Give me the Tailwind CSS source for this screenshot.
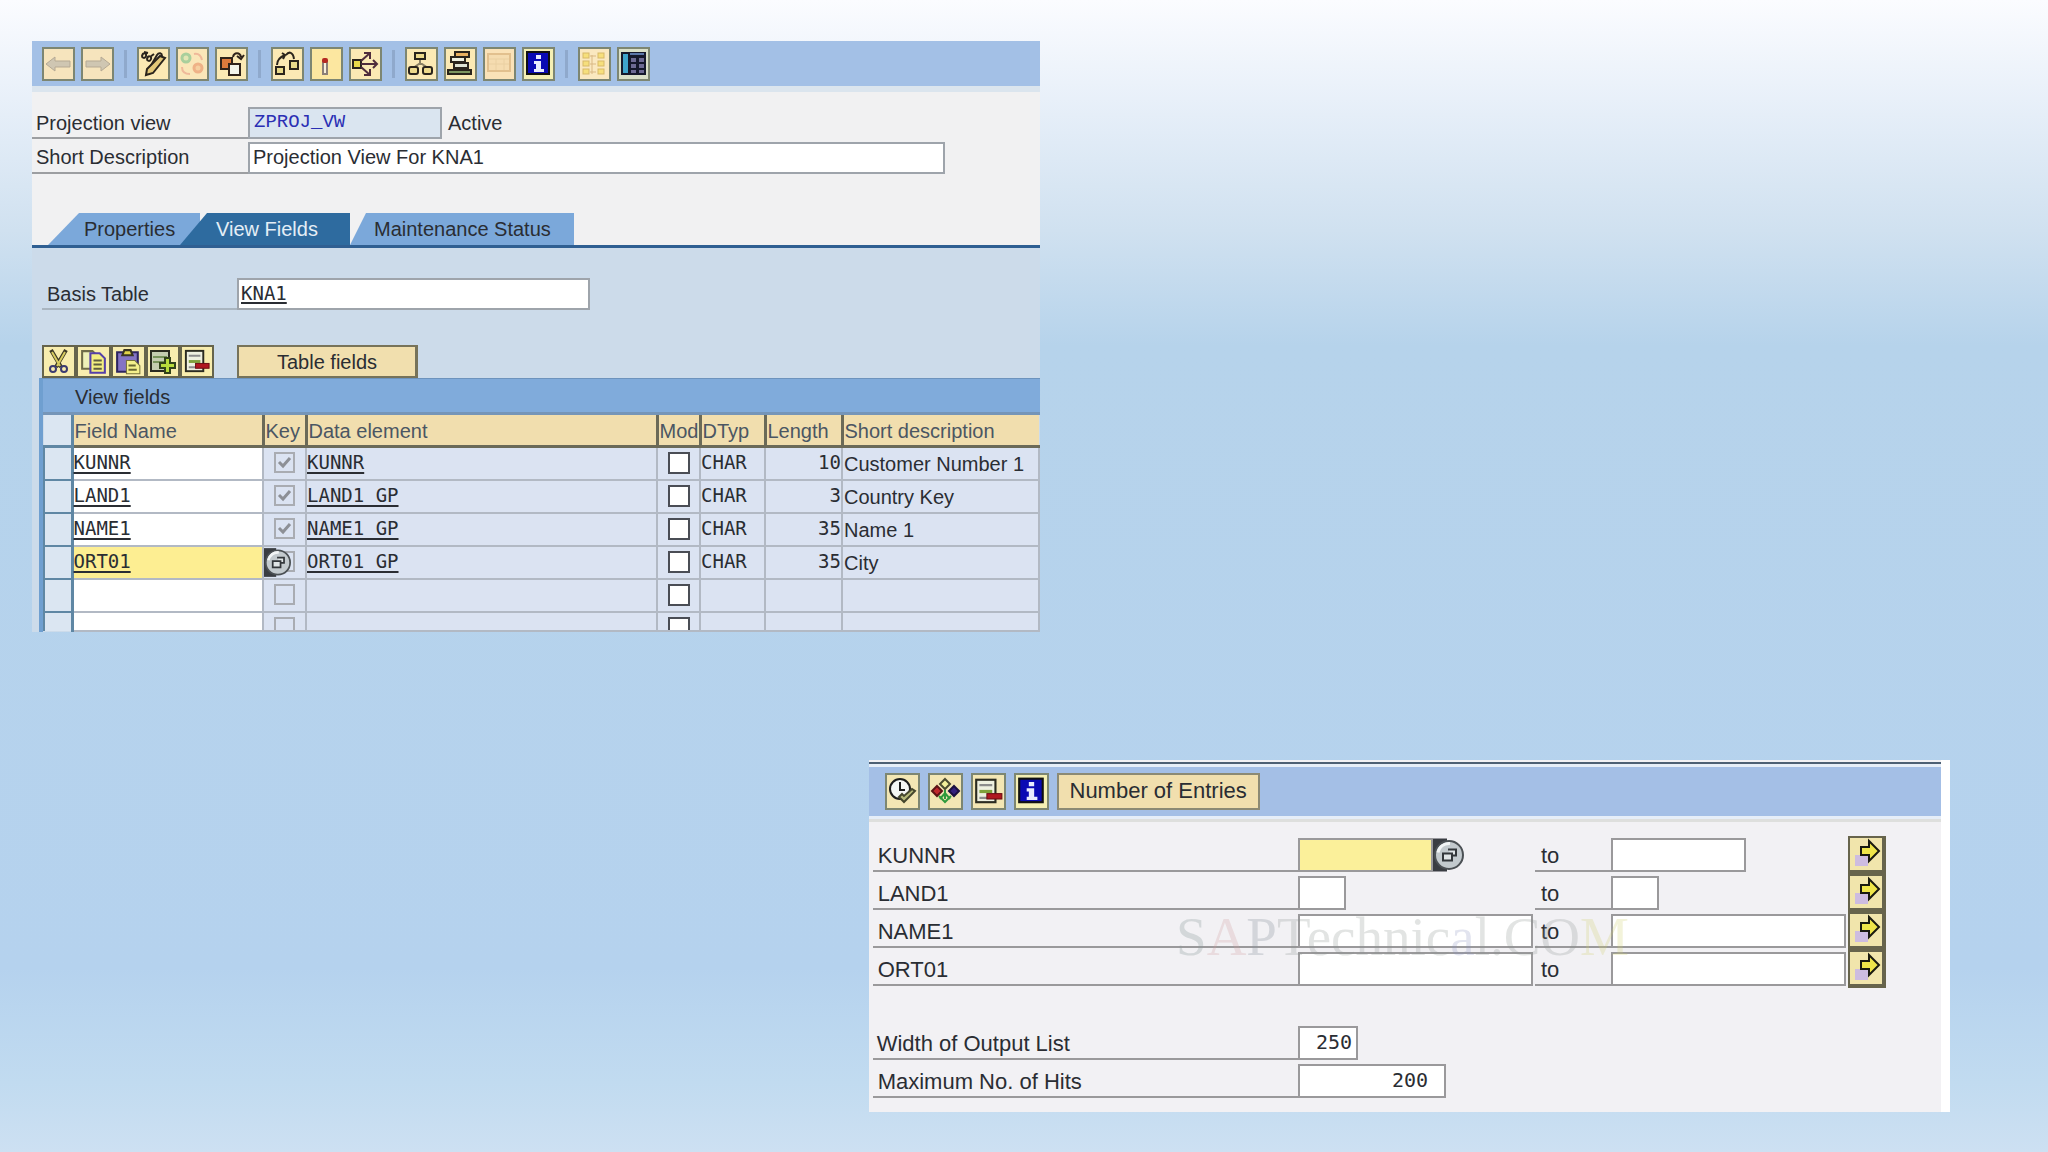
<!DOCTYPE html>
<html lang="en">
<head>
<meta charset="utf-8">
<meta name="viewport" content="width=device-width, initial-scale=1">
<title>Projection view</title>
<script src="https://cdn.jsdelivr.net/npm/@tailwindcss/browser@4"></script>
</head>
<body class="font-['Liberation_Sans',Arial,sans-serif] text-[#2a2d33]">

<!-- Shared icon shapes -->
<svg width="0" height="0" class="absolute" aria-hidden="true">
  <symbol id="i-info" viewBox="0 0 29 30">
    <rect x="3" y="3" width="22" height="22" fill="#0a0ab4" stroke="#111" stroke-width="2"/>
    <path d="M12 6h5v4h-5zM10 12h7v8h3v3H10v-3h2v-5h-2z" fill="#e9ecff"/>
  </symbol>
  <symbol id="i-rowminus" viewBox="0 0 29 30">
    <rect x="3" y="4" width="18" height="21" fill="#eef0e0" stroke="#2b2b20" stroke-width="2"/>
    <path d="M6 9h12M6 21h10" stroke="#8c8c8c" stroke-width="2"/><path d="M6 15h12" stroke="#7ea03a" stroke-width="3"/>
    <rect x="13" y="17" width="14" height="5" fill="#b01820" stroke="#6d0c12"/>
  </symbol>
  <symbol id="i-arrow" viewBox="0 0 32 32">
    <rect x="5" y="17" width="13" height="11" fill="#cdbce0"/>
    <path d="M11 9h8V3l10 10-10 10v-6h-8z" fill="#efe54a" stroke="#1a1a10" stroke-width="2"/>
  </symbol>
  <symbol id="i-f4" viewBox="0 0 31 33">
    <rect width="14" height="33" fill="#3a3d42"/>
    <circle cx="16" cy="16.5" r="14" fill="#c3cace" stroke="#4b5054" stroke-width="2"/>
    <path d="M5 14a11 11 0 0 1 12-9" fill="none" stroke="#f2f5f6" stroke-width="3"/>
    <path d="M15 11h8v6h-4M10 15h9v7h-9z" fill="#dfe4e6" stroke="#33373b" stroke-width="2"/>
  </symbol>
  <symbol id="i-check" viewBox="0 0 21 21">
    <path d="M5 10l4 4 7-8" fill="none" stroke="#8d9096" stroke-width="3"/>
  </symbol>
</svg>

<main class="flex min-h-screen flex-col bg-[linear-gradient(to_bottom,#fbfcff_0%,#e5eef8_10%,#d0e1f0_20%,#b6d3eb_30%,#b5d2ee_84%,#c1dbf0_94%,#cde0f2_100%)] pb-10 pt-[41px]">

  <!-- Dictionary view editor -->
  <section class="ml-8 w-[49.2%] min-w-[960px] overflow-hidden bg-[#f1f1f2] text-[20px] leading-6">
    <div class="flex h-[45px] items-center gap-1.5 bg-[#a3c0e6] pl-2.5">
      <button aria-label="Back" class="h-[34px] w-[33px] border-2 border-[#7d8672] bg-[#f6e4bd]"><svg viewBox="0 0 29 30"><path d="M2 15l9-7v4h15v6H11v4z" fill="#cfc6b2" stroke="#b5a994"/></svg></button>
      <button aria-label="Forward" class="h-[34px] w-[33px] border-2 border-[#7d8672] bg-[#f6e4bd]"><svg viewBox="0 0 29 30"><path d="M27 15l-9-7v4H3v6h15v4z" fill="#cfc6b2" stroke="#b5a994"/></svg></button>
      <span class="mx-1 h-7 w-[3px] bg-[#8fa9cc]"></span>
      <button aria-label="Display or change" class="h-[34px] w-[33px] border-2 border-[#7d8672] bg-[#fbe9b4]"><svg viewBox="0 0 29 30"><path d="M10 20L18 6c2-3 5-2 5 1L11 24z" fill="#f3ead0" stroke="#2a241c" stroke-width="2"/><path d="M3 7c1-4 5-3 4 0s-4 2-4 0zM8 10c1-4 5-3 4 0s-4 2-4 0zM5 3l4 1M11 8l4-3" fill="none" stroke="#2a241c" stroke-width="2"/><path d="M7 26l1-6L21 7l5 2-12 15z" fill="#e3c878" stroke="#2a241c" stroke-width="2"/></svg></button>
      <button aria-label="Activate" class="h-[34px] w-[33px] border-2 border-[#7d8672] bg-[#fae6b8]"><svg viewBox="0 0 29 30"><circle cx="8" cy="9" r="4" fill="#e2e6b4" stroke="#a9cf9c" stroke-width="3"/><circle cx="20" cy="19" r="4" fill="#f6cfa0" stroke="#efb287" stroke-width="3"/><path d="M16 5c5-1 7 2 8 6M4 18c0 5 3 7 8 7" fill="none" stroke="#efb99a" stroke-width="2"/></svg></button>
      <button aria-label="Other object" class="h-[34px] w-[33px] border-2 border-[#7d8672] bg-[#fbe9b4]"><svg viewBox="0 0 29 30"><rect x="4" y="9" width="11" height="11" fill="#dd7a3c" stroke="#30231a" stroke-width="2"/><rect x="12" y="15" width="11" height="11" fill="#f3f4ea" stroke="#30231a" stroke-width="2"/><path d="M16 8c1-5 7-5 8 0M20 7l4 3 3-4" fill="none" stroke="#30231a" stroke-width="2"/></svg></button>
      <span class="mx-1 h-7 w-[3px] bg-[#8fa9cc]"></span>
      <button aria-label="Check" class="h-[34px] w-[33px] border-2 border-[#7d8672] bg-[#fbe9b4]"><svg viewBox="0 0 29 30"><path d="M4 16c0-5 3-8 8-10l-3-2m3 2l-2 4M13 6c3-4 7-3 8 4" fill="none" stroke="#2a241c" stroke-width="2"/><rect x="3" y="18" width="8" height="7" fill="#e8d98a" stroke="#2a241c" stroke-width="2"/><rect x="17" y="12" width="8" height="8" fill="#e8d98a" stroke="#2a241c" stroke-width="2"/></svg></button>
      <button aria-label="Activate now" class="h-[34px] w-[33px] border-2 border-[#7d8672] bg-[#fce7a0]"><svg viewBox="0 0 29 30"><rect x="11" y="13" width="4" height="12" fill="#f6efdc" stroke="#8b7f78" stroke-width="2"/><rect x="10" y="9" width="6" height="5" rx="2" fill="#b52a22"/></svg></button>
      <button aria-label="Where-used list" class="h-[34px] w-[33px] border-2 border-[#7d8672] bg-[#fbe9b4]"><svg viewBox="0 0 29 30"><rect x="2" y="11" width="8" height="8" fill="#e8d94a" stroke="#2a241c" stroke-width="2"/><path d="M10 15h16M10 12l9-8M10 18l9 8M22 11l4 4-4 4M13 4h6v6M13 26h6v-6" fill="none" stroke="#4f2c3c" stroke-width="2"/></svg></button>
      <span class="mx-1 h-7 w-[3px] bg-[#8fa9cc]"></span>
      <button aria-label="Object list" class="h-[34px] w-[33px] border-2 border-[#7d8672] bg-[#fbe9b4]"><svg viewBox="0 0 29 30"><path d="M13 11v4M6 19l6-4h3l6 4" fill="none" stroke="#8a8064" stroke-width="2"/><g fill="#eeda8c" stroke="#2a241c" stroke-width="2"><rect x="8" y="4" width="10" height="6"/><rect x="2" y="18" width="9" height="7" rx="2"/><rect x="16" y="18" width="9" height="7" rx="2"/></g></svg></button>
      <button aria-label="Append structure" class="h-[34px] w-[33px] border-2 border-[#7d8672] bg-[#fbe9b4]"><svg viewBox="0 0 29 30"><g stroke="#2a241c" stroke-width="2"><rect x="9" y="3" width="14" height="5" fill="#e8b060"/><rect x="5" y="8" width="14" height="5" fill="#eef0e0"/><rect x="8" y="14" width="14" height="5" fill="#dfe3d4"/><rect x="2" y="21" width="23" height="4" fill="#7d9560"/></g></svg></button>
      <button aria-label="Contents" class="h-[34px] w-[33px] border-2 border-[#7d8672] bg-[#fae2b8]"><svg viewBox="0 0 29 30"><rect x="3" y="5" width="22" height="17" fill="#f5dcb0" stroke="#e2c08e" stroke-width="2"/><path d="M4 10h20M11 10v11M19 10v11M4 15h20" stroke="#ead0a2"/></svg></button>
      <button aria-label="Information" class="h-[34px] w-[33px] border-2 border-[#7d8672] bg-[#f4efb4]"><svg class="h-full w-full"><use href="#i-info"/></svg></button>
      <span class="mx-1 h-7 w-[3px] bg-[#8fa9cc]"></span>
      <button aria-label="Hierarchy" class="h-[34px] w-[33px] border-2 border-[#7d8672] bg-[#fae8c0]"><svg viewBox="0 0 29 30"><path d="M12 6v19M10 7h6M10 15h6M10 23h6" stroke="#d9b884"/><g fill="#f6df7c" stroke="#d8b968"><rect x="3" y="4" width="6" height="5"/><rect x="3" y="12" width="6" height="5"/><rect x="3" y="20" width="6" height="5"/><rect x="18" y="4" width="6" height="5"/><rect x="18" y="12" width="6" height="5"/><rect x="18" y="20" width="6" height="5"/></g></svg></button>
      <button aria-label="Table view" class="h-[34px] w-[33px] border-2 border-[#7d8672] bg-[#d9dfc8]"><svg viewBox="0 0 29 30"><rect x="2" y="3" width="25" height="23" fill="#15182c"/><path d="M4 5h5v19H4z" fill="#3fa4cc"/><path d="M12 9h5v4h-5zM12 15h5v4h-5zM12 21h5v3h-5zM20 9h5v4h-5zM20 15h5v4h-5zM20 21h5v3h-5z" fill="#6d6a94"/><path d="M11 5h14" stroke="#5a76a8" stroke-width="2"/></svg></button>
    </div>
    <div class="h-1.5 bg-[#dbe5ee]"></div>

    <div class="grid gap-y-[3px] pt-[15px]">
      <div class="flex h-8">
        <label for="view" class="w-[216px] border-b-2 border-[#9c9ea1] pl-1 pt-1">Projection view</label>
        <input id="view" value="ZPROJ_VW" readonly class="h-8 w-[194px] border-2 border-[#9ea4ab] bg-[#dae5f0] pb-0.5 pl-1 font-['Liberation_Mono',monospace] text-[19px] text-[#2a2fb4] outline-none">
        <span class="pl-1.5 pt-1">Active</span>
      </div>
      <div class="flex h-8">
        <label for="desc" class="w-[216px] border-b-2 border-[#9c9ea1] pl-1 pt-[3px]">Short Description</label>
        <input id="desc" value="Projection View For KNA1" class="h-8 w-[697px] border-2 border-[#9ea4ab] bg-white pb-0.5 pl-[3px] outline-none">
      </div>
    </div>

    <nav class="mt-[39px] flex h-[35px] border-b-3 border-[#2f5f92] pl-4" aria-label="View sections">
      <a href="#properties" class="w-[152px] bg-[#7ba8da] pl-9 pt-1 [clip-path:polygon(31px_0,100%_0,100%_100%,0_100%)]">Properties</a>
      <a href="#fields" class="-ml-5 w-[170px] bg-[#2e6b9f] pl-9 pt-1 text-[#e4eef6] [clip-path:polygon(27px_0,100%_0,100%_100%,0_100%)]" aria-current="page">View Fields</a>
      <a href="#status" class="w-56 bg-[#7ba8da] pl-6 pt-1 [clip-path:polygon(16px_0,100%_0,100%_100%,0_100%)]">Maintenance Status</a>
    </nav>

    <div class="bg-[#ccdbea]">
      <div class="flex pl-2.5 pt-[30px]">
        <label for="basis" class="w-[195px] border-b-2 border-[#a9b5c0] pl-[5px] pt-1">Basis Table</label>
        <input id="basis" value="KNA1" class="h-8 w-[353px] border-2 border-[#9ea4ab] bg-white pb-0.5 pl-0.5 font-['DejaVu_Sans_Mono',monospace] text-[19px] underline decoration-2 underline-offset-2 outline-none">
      </div>

      <div class="mt-[35px] flex pl-2.5">
        <button aria-label="Cut" class="h-[33px] w-[34px] border-2 border-[#66644c] bg-[#f8edae]"><svg viewBox="0 0 30 29"><path d="M7 3l10 17M22 3L12 20" stroke="#3c3926" stroke-width="4"/><path d="M8 5l8 14M21 5l-8 14" stroke="#d8cc60" stroke-width="2"/><circle cx="9" cy="22" r="3" fill="none" stroke="#3b3b70" stroke-width="2"/><circle cx="20" cy="22" r="3" fill="none" stroke="#3b3b70" stroke-width="2"/></svg></button>
        <button aria-label="Copy" class="h-[33px] w-[35px] border-2 border-[#66644c] bg-[#f8edae]"><svg viewBox="0 0 30 29"><path d="M4 4h10l4 4v13H4z" fill="#eef0b8" stroke="#6e6b48" stroke-width="2"/><path d="M12 6h9l5 5v14H12z" fill="#f3ee80" stroke="#5540a8" stroke-width="2"/><path d="M15 13h8M15 17h8M15 21h8" stroke="#5f5c40" stroke-width="2"/></svg></button>
        <button aria-label="Paste" class="h-[33px] w-[35px] border-2 border-[#66644c] bg-[#f8edae]"><svg viewBox="0 0 30 29"><path d="M4 5h20v19H4z" fill="#8474c4" stroke="#2d2560" stroke-width="2"/><path d="M9 8l2-5h6l2 5z" fill="#e2d448" stroke="#3a3520" stroke-width="2"/><path d="M13 13h8l5 5v8H13z" fill="#f5f08c" stroke="#77733a"/><path d="M15 18h7M15 22h8" stroke="#6b6832" stroke-width="2"/></svg></button>
        <button aria-label="Insert row" class="h-[33px] w-[34px] border-2 border-[#66644c] bg-[#f8edae]"><svg viewBox="0 0 30 29"><rect x="3" y="4" width="18" height="20" fill="#c5cdb0" stroke="#2b2b20" stroke-width="2"/><path d="M5 10h14M5 15h12" stroke="#78935c" stroke-width="2"/><path d="M17 11h5v5h5v5h-5v5h-5v-5h-5v-5h5z" fill="#b9dc3c" stroke="#33431a" stroke-width="2"/></svg></button>
        <button aria-label="Delete row" class="h-[33px] w-[34px] border-2 border-[#66644c] bg-[#f8edae]"><svg class="h-full w-full"><use href="#i-rowminus"/></svg></button>
        <button class="ml-[23px] h-[33px] w-[181px] border-2 border-r-3 border-[#77735a] bg-[#f1dfae]">Table fields</button>
      </div>

      <div class="ml-[7px] border-l-4 border-[#6f9fd0] border-t border-t-[#6d93bd]">
        <h2 id="fields" class="h-9 border-b-3 border-[#7595b8] bg-[#80abdb] pl-8 pt-1.5">View fields</h2>
        <table class="w-full table-fixed border-collapse" aria-labelledby="fields">
          <colgroup><col class="w-7"><col class="w-[191px]"><col class="w-[43px]"><col class="w-[351px]"><col class="w-[43px]"><col class="w-[65px]"><col class="w-[77px]"><col></colgroup>
          <thead>
            <tr class="h-[31px] whitespace-nowrap bg-[#f1deae] text-left text-[#4b5663] [&>th]:border-r-3 [&>th]:border-b-3 [&>th]:border-[#6b6a58] [&>th]:p-0 [&>th]:pl-px [&>th]:pt-[3px] [&>th]:font-normal">
              <th class="border-[#5f87a4]! bg-[#dbe6f2]" aria-label="Row selector"></th><th>Field Name</th><th>Key</th><th>Data element</th><th>Mod</th><th>DTyp</th><th>Length</th><th class="border-r-0!">Short description</th>
            </tr>
          </thead>
          <tbody id="rows" class="bg-[#dbe3f2]"></tbody>
        </table>
      </div>
    </div>
  </section>

  <!-- Data browser selection screen -->
  <section class="mr-[98px] mt-32 w-[52.8%] min-w-[1040px] self-end border-r-9 border-white bg-[#f2f1f4] text-[22px] leading-7">
    <div class="mt-0.5 border-t-2 border-[#4d6074]"></div>
    <div class="flex h-[55px] items-center gap-2 border-y-3 border-[#e6eef8] bg-[#a4bfe6] pl-4">
      <button aria-label="Execute" class="h-[37px] w-[35px] border-2 border-[#7d8672] bg-[#f3e6b4]"><svg viewBox="0 0 31 33"><circle cx="13" cy="14" r="10" fill="#f4f6f4" stroke="#1c1c1c" stroke-width="2"/><path d="M13 7v8h5" fill="none" stroke="#1c1c1c" stroke-width="2"/><path d="M12 22l5 5 11-11-3-2-8 7-2-2z" fill="#b4b878" stroke="#44462c" stroke-width="2"/></svg></button>
      <button aria-label="Get variant" class="h-[37px] w-[35px] border-2 border-[#7d8672] bg-[#f3e6b4]"><svg viewBox="0 0 31 33"><path d="M15 4l5 5-5 5-5-5z" fill="#f3ee9a" stroke="#4b4a30" stroke-width="2"/><path d="M7 11l5 5-5 5-5-5z" fill="#c0282c" stroke="#5c1416" stroke-width="2"/><path d="M24 11l5 5-5 5-5-5z" fill="#33207c" stroke="#1b1040" stroke-width="2"/><path d="M15 15v9M9 21l6 6 6-6M10 24l5-6 5 6" fill="none" stroke="#2f9a3c" stroke-width="2"/></svg></button>
      <button aria-label="Delete selection" class="h-[37px] w-[35px] border-2 border-[#7d8672] bg-[#f3e6b4]"><svg class="h-full w-full"><use href="#i-rowminus"/></svg></button>
      <button aria-label="Information" class="h-[37px] w-[35px] border-2 border-[#7d8672] bg-[#f4efb4]"><svg class="h-full w-full"><use href="#i-info"/></svg></button>
      <button class="h-[37px] w-[203px] border-2 border-[#8c8a74] bg-[#f1dfae]">Number of Entries</button>
    </div>
    <div class="h-[3px] bg-[#dedfdd]"></div>

    <form class="relative grid gap-y-1 pb-[14px] pl-1 pr-[55px] pt-4">
      <div class="grid grid-cols-[1fr_237px_76px_237px_38px] grid-rows-[34px]">
        <label for="kunnr" class="border-b-2 border-[#9a999b] pl-[5px] pt-1">KUNNR</label>
        <div class="flex"><input id="kunnr" class="h-[34px] w-[135px] border-2 border-[#9a999b] bg-[#fbf09a] outline-none"><button type="button" aria-label="Possible values" class="h-[34px] w-[31px]"><svg class="h-full w-full"><use href="#i-f4"/></svg></button></div>
        <label for="kunnr2" class="border-b-2 border-[#9a999b] pl-1.5 pt-1">to</label>
        <input id="kunnr2" class="h-[34px] w-[135px] border-2 border-[#9a999b] bg-white outline-none">
        <button type="button" aria-label="Multiple selection KUNNR" class="-mt-0.5 h-[38px] border-2 border-r-4 border-b-4 border-[#67644c] bg-[#f1e5ac]"><svg viewBox="0 0 32 32"><use href="#i-arrow"/></svg></button>
      </div>
      <div class="grid grid-cols-[1fr_237px_76px_237px_38px] grid-rows-[34px]">
        <label for="land" class="border-b-2 border-[#9a999b] pl-[5px] pt-1">LAND1</label>
        <input id="land" class="h-[34px] w-12 border-2 border-[#9a999b] bg-white outline-none">
        <label for="land2" class="border-b-2 border-[#9a999b] pl-1.5 pt-1">to</label>
        <input id="land2" class="h-[34px] w-12 border-2 border-[#9a999b] bg-white outline-none">
        <button type="button" aria-label="Multiple selection LAND1" class="-mt-0.5 h-[38px] border-2 border-r-4 border-b-4 border-[#67644c] bg-[#f1e5ac]"><svg viewBox="0 0 32 32"><use href="#i-arrow"/></svg></button>
      </div>
      <div class="grid grid-cols-[1fr_237px_76px_237px_38px] grid-rows-[34px]">
        <label for="name" class="border-b-2 border-[#9a999b] pl-[5px] pt-1">NAME1</label>
        <input id="name" class="h-[34px] w-[235px] border-2 border-[#9a999b] bg-white outline-none">
        <label for="name2" class="border-b-2 border-[#9a999b] pl-1.5 pt-1">to</label>
        <input id="name2" class="h-[34px] w-[235px] border-2 border-[#9a999b] bg-white outline-none">
        <button type="button" aria-label="Multiple selection NAME1" class="-mt-0.5 h-[38px] border-2 border-r-4 border-b-4 border-[#67644c] bg-[#f1e5ac]"><svg viewBox="0 0 32 32"><use href="#i-arrow"/></svg></button>
      </div>
      <div class="grid grid-cols-[1fr_237px_76px_237px_38px] grid-rows-[34px]">
        <label for="ort" class="border-b-2 border-[#9a999b] pl-[5px] pt-1">ORT01</label>
        <input id="ort" class="h-[34px] w-[235px] border-2 border-[#9a999b] bg-white outline-none">
        <label for="ort2" class="border-b-2 border-[#9a999b] pl-1.5 pt-1">to</label>
        <input id="ort2" class="h-[34px] w-[235px] border-2 border-[#9a999b] bg-white outline-none">
        <button type="button" aria-label="Multiple selection ORT01" class="-mt-0.5 h-[38px] border-2 border-r-4 border-b-4 border-[#67644c] bg-[#f1e5ac]"><svg viewBox="0 0 32 32"><use href="#i-arrow"/></svg></button>
      </div>
      <div class="mt-9 grid grid-cols-[1fr_588px] grid-rows-[34px]">
        <label for="width" class="border-b-2 border-[#9a999b] pl-1 pt-1">Width of Output List</label>
        <input id="width" value="250" class="h-[34px] w-[60px] border-2 border-[#9a999b] bg-white pb-0.5 pr-1 text-right font-['DejaVu_Sans_Mono',monospace] text-[20px] outline-none">
      </div>
      <div class="grid grid-cols-[1fr_588px] grid-rows-[34px]">
        <label for="hits" class="border-b-2 border-[#9a999b] pl-[5px] pt-1">Maximum No. of Hits</label>
        <input id="hits" value="200" class="h-[34px] w-[148px] border-2 border-[#9a999b] bg-white pb-0.5 pr-4 text-right font-['DejaVu_Sans_Mono',monospace] text-[20px] outline-none">
      </div>
      <div class="pointer-events-none absolute right-[312px] top-[85px] whitespace-nowrap font-['Liberation_Serif',serif] text-[55px] leading-[60px] text-[#8a9490]/25"><span class="text-[#8c9a9c]/30">S</span><span class="text-[#cf9c9c]/25">A</span><span class="text-[#8a94a0]/30">P</span>Technic<span class="text-[#8c92c0]/25">a</span>l.CO<span class="text-[#cfcf6a]/25">M</span></div>
    </form>
  </section>
</main>

<script>
  const rows = [
    ['KUNNR', 'KUNNR', '10', 'Customer Number 1', true],
    ['LAND1', 'LAND1_GP', '3', 'Country Key', true],
    ['NAME1', 'NAME1_GP', '35', 'Name 1', true],
    ['ORT01', 'ORT01_GP', '35', 'City', false],
    null, null
  ];
  const mono = "pt-0.5 font-['DejaVu_Sans_Mono',monospace] text-[19px]";
  const link = 'underline decoration-2 underline-offset-3';
  const cell = 'border-r-2 border-b-2 border-[#b2b9c4] p-0';
  document.getElementById('rows').innerHTML = rows.map((r, i) => {
    const last = i === rows.length - 1;
    const active = i === 3;
    const box = last ? 'flex h-[17px] items-start overflow-hidden' : 'flex h-[31px] items-start';
    const edge = last ? 'border-b-0' : '';
    const c = `${cell} ${edge}`;
    const [name, elem, len, text, key] = r || ['', '', '', '', false];
    return `<tr class="whitespace-nowrap">
      <td class="border-r-3 ${last ? '' : 'border-b-2'} border-l-2 border-[#5f87a4] bg-[#dbe6f2] p-0"><div class="${box}"></div></td>
      <td class="${c} ${active ? 'bg-[#fdee92]' : 'bg-white'}"><div class="${box}"><a href="#${name}" class="${mono} ${link}">${name}</a></div></td>
      <td class="${c} relative"><div class="${box} justify-center"><span class="mt-1 grid">
        <input type="checkbox" disabled ${key ? 'checked' : ''} aria-label="Key ${name}" class="size-[21px] appearance-none border-2 border-[#a9acb2] [grid-area:1/1]">
        ${key ? '<svg class="size-[21px] [grid-area:1/1]"><use href="#i-check"/></svg>' : ''}</span></div>
        ${active ? '<button aria-label="Possible values" class="absolute left-0 top-0 h-[31px] w-[27px]"><svg class="h-full w-full"><use href="#i-f4"/></svg></button>' : ''}</td>
      <td class="${c}"><div class="${box}"><a href="#${elem}" class="${mono} ${link}">${elem}</a></div></td>
      <td class="${c}"><div class="${box} justify-center"><input type="checkbox" aria-label="Mod ${name}" class="mt-1 size-[22px] shrink-0 appearance-none border-2 border-[#4a4d55] bg-white"></div></td>
      <td class="${c}"><div class="${box} ${mono}">${r ? 'CHAR' : ''}</div></td>
      <td class="${c}"><div class="${box} ${mono} justify-end">${len}</div></td>
      <td class="${c} border-r-0"><div class="${box} pl-px pt-1">${text}</div></td>
    </tr>`;
  }).join('');
</script>
</body>
</html>
